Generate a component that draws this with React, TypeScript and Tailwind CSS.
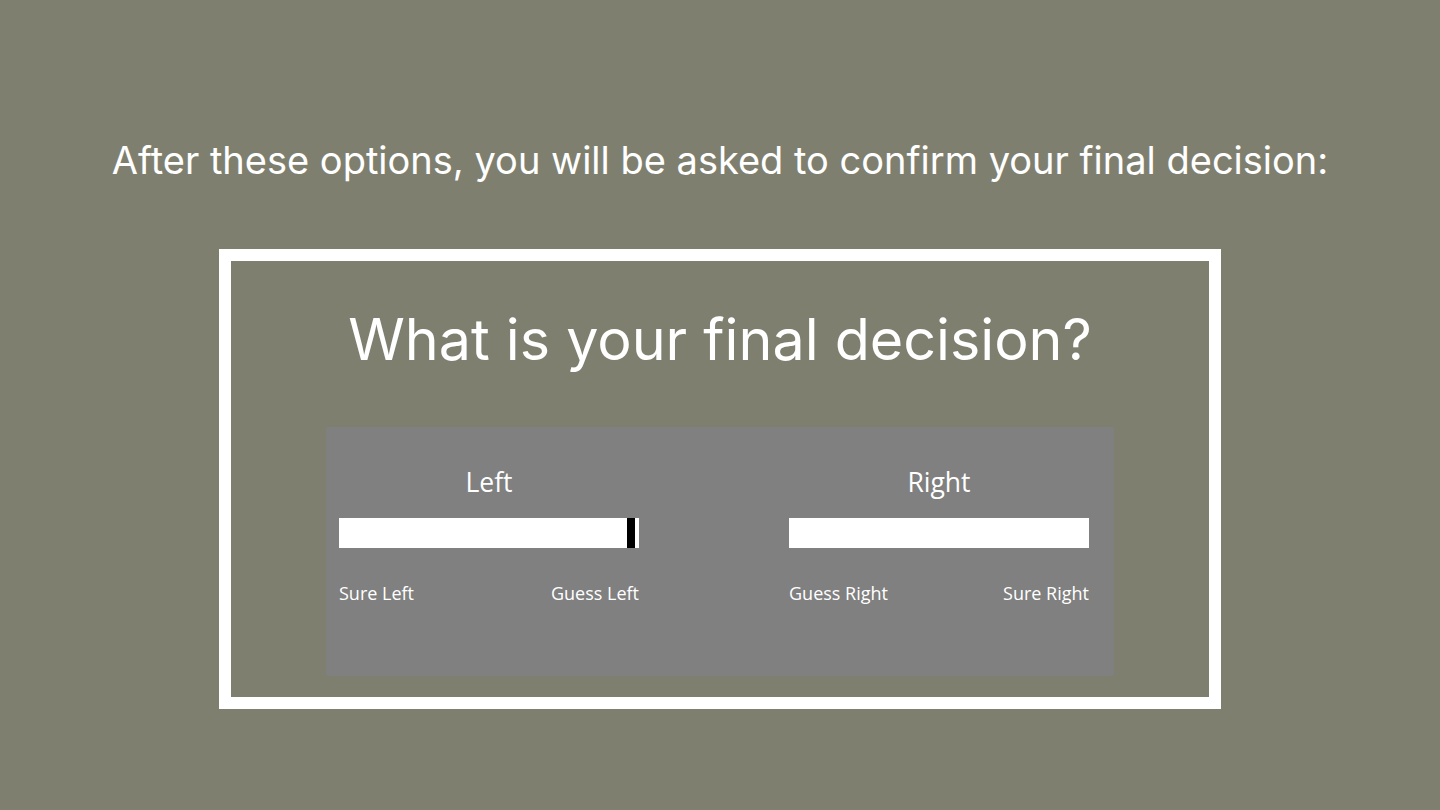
export default function App() {
  return (
    <div className="flex h-[810px] w-[1440px] flex-col items-center bg-[#7f7f6f] font-['Inter','Noto_Sans',sans-serif] text-white">
      <h1 className="mt-[134px] text-[38px] leading-[52px]">
        After these options, you will be asked to confirm your final decision:
      </h1>
      <div className="mt-[63px] flex h-[460px] w-[1002px] flex-col items-center border-[12px] border-white">
        <h2 className="mt-[42px] text-[57.4px] leading-[72px]">What is your final decision?</h2>
        <div className="mt-[52px] flex h-[249px] w-[788px] gap-[150px] rounded-[2px] bg-[#808080] pt-[36px] pl-[13px] font-['Open_Sans',sans-serif]">
          <Scale title="Left" left="Sure Left" right="Guess Left" marker />
          <Scale title="Right" left="Guess Right" right="Sure Right" />
        </div>
      </div>
    </div>
  );
}

function Scale({ title, left, right, marker }: { title: string; left: string; right: string; marker?: boolean }) {
  return (
    <div className="flex w-[300px] flex-col">
      <p className="text-center text-[26.5px] leading-[38px]">{title}</p>
      <div className="relative mt-[17px] h-[30px] bg-white">
        {marker && <div className="absolute top-0 right-[4px] h-[30px] w-[8px] bg-black" />}
      </div>
      <div className="mt-[33px] flex justify-between text-[18px] leading-[24px]">
        <span>{left}</span>
        <span>{right}</span>
      </div>
    </div>
  );
}
